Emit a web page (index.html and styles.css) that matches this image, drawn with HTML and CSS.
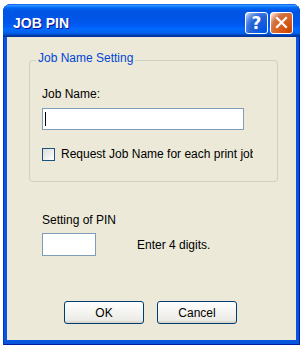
FILE: index.html
```html
<!DOCTYPE html>
<html>
<head>
<meta charset="utf-8">
<link rel="stylesheet" href="styles.css">
</head>
<body>
<div class="window">
  <div class="titlebar">
    <span class="title">JOB PIN</span>
    <div class="controls">
      <div class="ctl help">?</div>
      <div class="ctl close">
        <svg width="13" height="13" viewBox="0 0 13 13"><path d="M2 2 L11 11 M11 2 L2 11" stroke="#fff" stroke-width="2.2" stroke-linecap="square" fill="none"/></svg>
      </div>
    </div>
  </div>
  <div class="client">
    <fieldset class="group">
      <legend>Job Name Setting</legend>
      <div class="label">Job Name:</div>
      <div class="textbox wide"><span class="caret"></span></div>
      <div class="check"><span class="box"></span><span class="check-text">Request Job Name for each print job</span></div>
    </fieldset>
    <div class="pin">
      <div class="label">Setting of PIN</div>
      <div class="pin-row">
        <div class="textbox short"></div>
        <span class="hint">Enter 4 digits.</span>
      </div>
    </div>
    <div class="buttons">
      <button class="btn">OK</button>
      <button class="btn">Cancel</button>
    </div>
  </div>
</div>
</body>
</html>
```
FILE: styles.css
```css
body {
  margin: 0;
  background: #fff;
  font-family: "Liberation Sans", Arial, sans-serif;
  font-size: 12px;
  color: #000;
}
.window {
  margin: 4px 0 0 3px;
  width: 297px;
  height: 341px;
  background: #0855dd;
  border-radius: 8px 8px 0 0;
  display: flex;
  flex-direction: column;
  box-shadow: inset 1px 0 #0831d9, inset -1px 0 #001ea0, inset 0 -1px #001ea0;
}
.titlebar {
  height: 33px;
  box-sizing: border-box;
  padding: 4px 7px 0 10px;
  display: flex;
  align-items: center;
  justify-content: space-between;
  border-radius: 8px 8px 0 0;
  background: linear-gradient(180deg, #0058ee 0%, #3593ff 4%, #288eff 6%, #127dff 8%, #036ffc 10%, #0262ee 14%, #0057e5 20%, #0054e3 24%, #0055eb 56%, #005bf5 66%, #026afe 76%, #0062ef 86%, #0052d6 92%, #0040ab 94%, #003092 100%);
}
.title {
  color: #fff;
  font-weight: bold;
  font-size: 14px;
  text-shadow: 1px 1px #0f1089;
}
.controls {
  display: flex;
  gap: 2px;
}
.ctl {
  width: 23px;
  height: 22px;
  box-sizing: border-box;
  border: 1px solid #fff;
  border-radius: 3px;
  display: flex;
  align-items: center;
  justify-content: center;
  color: #fff;
}
.help {
  background: radial-gradient(circle at 90% 90%, #0054e9 0%, #2263d5 55%, #4479e4 70%, #a3bbec 90%, #fff 100%);
  font-weight: bold;
  font-size: 17px;
  font-family: "DejaVu Sans", sans-serif;
}
.close {
  background: radial-gradient(circle at 90% 90%, #cc4600 0%, #dc6527 55%, #cd7546 70%, #ffccb2 90%, #fff 100%);
}
.client {
  flex: 1;
  margin: 0 4px 5px 4px;
  background: #ece9d8;
}
.group {
  margin: 14px 0 0 22px;
  width: 249px;
  box-sizing: border-box;
  padding: 18px 12px 20px 12px;
  border: 1px solid #d0d0bf;
  border-radius: 4px;
}
.group legend {
  padding: 0 2px 4px;
  margin-left: -6px;
  line-height: 14px;
  color: #0046d5;
}
.label {
  line-height: 14px;
}
.textbox {
  border: 1px solid #7f9db9;
  background: #fff;
  box-sizing: border-box;
}
.wide {
  width: 202px;
  height: 22px;
  margin-top: 7px;
}
.caret {
  display: block;
  width: 1px;
  height: 14px;
  margin: 3px 0 0 2px;
  background: #000;
}
.check {
  display: flex;
  align-items: center;
  margin-top: 17px;
  height: 14px;
  width: 211px;
  overflow: hidden;
  white-space: nowrap;
}
.box {
  flex: none;
  width: 13px;
  height: 13px;
  box-sizing: border-box;
  border: 1px solid #1c5180;
  background: linear-gradient(135deg, #dcdcd7, #fff);
  margin-right: 6px;
}
.pin {
  margin: 31px 0 0 35px;
}
.pin-row {
  display: flex;
  align-items: center;
  margin-top: 6px;
}
.short {
  width: 54px;
  height: 23px;
}
.hint {
  margin-left: 41px;
}
.buttons {
  display: flex;
  gap: 13px;
  margin: 45px 0 0 57px;
}
.btn {
  width: 80px;
  height: 23px;
  padding: 0;
  border: 1px solid #003c74;
  border-radius: 3px;
  background: linear-gradient(180deg, #fff 0%, #ecebe6 86%, #d6d0c5 100%);
  font-family: "Liberation Sans", Arial, sans-serif;
  font-size: 12px;
  color: #000;
}
```
